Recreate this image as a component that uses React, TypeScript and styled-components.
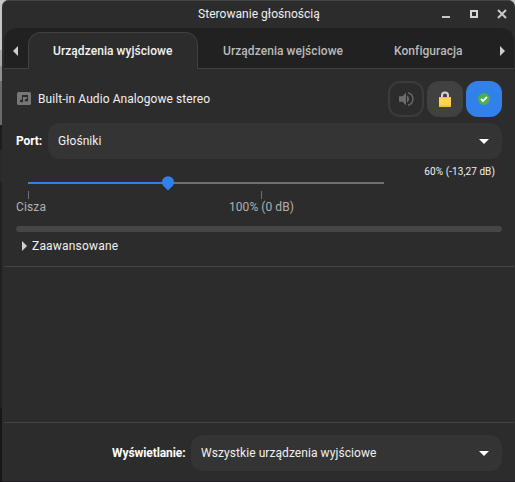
import React from "react";
import styled, { createGlobalStyle } from "styled-components";

const GlobalStyle = createGlobalStyle`
  * { box-sizing: border-box; }
  html, body, #root { margin: 0; height: 100%; }
  body { overflow: hidden; background: #1b1b1b; font: 12px/16px Roboto, sans-serif; color: #f0f0f0; }
  svg { display: block; }
`;

const Desktop = styled.div`
  display: flex;
  width: 515px;
  height: 482px;
  padding-left: 2px;
  background: linear-gradient(#c6c8c8 0 50px, #a9abab 50px 66px, #8f9191 66px 81px, #696b6b 81px 125px, #1d1d1d 125px 150px, #292929 150px 182px, #202020 182px 408px, #171717 408px);
`;

const Window = styled.main`
  display: flex;
  flex-direction: column;
  width: 513px;
  height: 482px;
  padding: 0 1px 0 2px;
  background: #2c2c2c;
  border-radius: 7px 7px 0 0;
  box-shadow: inset 0 1px #444444, inset 0 -1px #211e23;
`;

const TitleBar = styled.header`
  display: flex;
  align-items: center;
  height: 28px;
  padding-left: 194px;
`;

const Title = styled.h1`
  flex: 1;
  margin: 0;
  font-size: 12px;
  font-weight: 400;
  letter-spacing: 0.04px;
`;

const WindowControls = styled.div`
  display: flex;
  width: 76px;
`;

const TabBar = styled.nav`
  display: flex;
  height: 41px;
  background: #212121;
  border-radius: 13px 13px 0 0;
`;

const TabScroll = styled.div<{ $inset?: number }>`
  display: flex;
  align-items: center;
  justify-content: center;
  width: 24px;
  padding: 5px ${(p) => p.$inset ?? 0}px 0 0;
  border-bottom: 1px solid #414141;
`;

const Tab = styled.div<{ $active?: boolean; $width: number }>`
  width: ${(p) => p.$width}px;
  height: ${(p) => (p.$active ? 37 : 41)}px;
  margin-top: ${(p) => (p.$active ? 4 : 0)}px;
  padding: ${(p) => (p.$active ? "10px 0 0 24px" : "15px 0 0 25px")};
  border: solid #414141;
  border-width: ${(p) => (p.$active ? "1px 1px 0" : "0 0 1px")};
  border-radius: ${(p) => (p.$active ? "13px 13px 0 0" : "0")};
  background: ${(p) => (p.$active ? "#2c2c2c" : "transparent")};
  color: ${(p) => (p.$active ? "#f2f2f2" : "#bababa")};
  font-weight: 500;
  letter-spacing: 0.06px;
  white-space: nowrap;
`;

const Device = styled.section`
  height: 198px;
  padding: 12px 12px 0;
  border-bottom: 1px solid #434343;
`;

const DeviceHeader = styled.div`
  display: flex;
  align-items: center;
  height: 36px;
`;

const DeviceName = styled.div`
  flex: 1;
  padding-left: 7px;
  letter-spacing: 0.07px;
`;

const Actions = styled.div`
  display: flex;
  gap: 3px;
`;

const ActionButton = styled.button<{ $tone: "plain" | "raised" | "accent" }>`
  display: grid;
  place-items: center;
  width: 36px;
  height: 36px;
  padding: 0;
  border: 2px solid ${(p) => (p.$tone === "accent" ? "#3281ea" : p.$tone === "raised" ? "#414141" : "#3b3b3b")};
  border-radius: 12px;
  background: ${(p) => (p.$tone === "accent" ? "#3281ea" : p.$tone === "raised" ? "#414141" : "#2c2c2c")};
`;

const PortRow = styled.div`
  display: flex;
  align-items: center;
  margin-top: 6px;
`;

const FieldLabel = styled.label<{ $width: number; $spacing: number }>`
  width: ${(p) => p.$width}px;
  font-weight: 700;
  color: #fff;
  letter-spacing: ${(p) => p.$spacing}px;
`;

const Combo = styled.div`
  display: flex;
  align-items: center;
  justify-content: space-between;
  flex: 1;
  height: 36px;
  padding: 0 13px 0 10px;
  border-radius: 12px;
  background: #343434;
`;

const ComboText = styled.span<{ $spacing: number }>`
  letter-spacing: ${(p) => p.$spacing}px;
`;

const VolumeRow = styled.div`
  display: grid;
  grid-template-columns: 380px 1fr;
  height: 67px;
`;

const Scale = styled.div`
  padding-top: 23px;
`;

const Track = styled.div`
  position: relative;
  width: 356px;
  height: 2px;
  margin-left: 12px;
  background: linear-gradient(90deg, #3281ea 140px, #707070 140px);
`;

const Knob = styled.svg`
  position: absolute;
  left: 133px;
  top: -6px;
`;

const Marks = styled.div`
  display: grid;
  grid-template-columns: 213px 1fr;
  padding-top: 7px;
`;

const Mark = styled.div<{ $offset: number; $spacing: number }>`
  color: #b0b0b0;
  letter-spacing: ${(p) => p.$spacing}px;
  &::before {
    content: "";
    display: block;
    width: 1px;
    height: 8px;
    margin-left: ${(p) => p.$offset}px;
    background: #707070;
  }
`;

const VolumeValue = styled.output`
  padding: 5px 7px 0 0;
  font-size: 10px;
  letter-spacing: 0.08px;
  text-align: right;
  white-space: nowrap;
`;

const Meter = styled.div`
  height: 6px;
  border-radius: 3px;
  background: #464646;
`;

const Expander = styled.div`
  display: flex;
  align-items: center;
  gap: 5px;
  padding: 6px 0 0 6px;
  letter-spacing: 0.19px;
`;

const EmptyArea = styled.div`
  flex: 1;
`;

const FilterBar = styled.footer`
  display: flex;
  height: 60px;
  padding: 12px 12px 0 108px;
  border-top: 1px solid #434343;
  ${FieldLabel} { padding-top: 10px; }
`;

const Arrow = ({ dir, color = "#cfcfcf" }: { dir: "left" | "right" | "down"; color?: string }) => (
  <svg width={dir === "down" ? 10 : 5} height={dir === "down" ? 5 : 10}>
    <path fill={color} d={dir === "left" ? "M5 0V10L0 5Z" : dir === "right" ? "M0 0V10L5 5Z" : "M0 0H10L5 5Z"} />
  </svg>
);

export default function App() {
  return (
    <>
      <GlobalStyle />
      <Desktop>
        <Window>
          <TitleBar>
            <Title>Sterowanie głośnością</Title>
            <WindowControls>
              <svg width="76" height="28">
                <path fill="#c8c8c8" d="M4 16h8v2H4z" />
                <rect x="33" y="11" width="6" height="6" fill="none" stroke="#d5d5d5" strokeWidth="2" />
                <path d="M60 10l8 8M68 10l-8 8" fill="none" stroke="#c8c8c8" strokeWidth="2" />
              </svg>
            </WindowControls>
          </TitleBar>
          <TabBar>
            <TabScroll $inset={2}><Arrow dir="left" /></TabScroll>
            <Tab $active $width={170}>Urządzenia wyjściowe</Tab>
            <Tab $width={171}>Urządzenia wejściowe</Tab>
            <Tab $width={121}>Konfiguracja</Tab>
            <TabScroll><Arrow dir="right" /></TabScroll>
          </TabBar>
          <Device>
            <DeviceHeader>
              <svg width="15" height="14" viewBox="0 0 15 14">
                <rect x="1" y="0" width="14" height="13" rx="1.5" fill="#777" />
                <path d="M6 3h6v2H6z" fill="#2c2c2c" />
                <path d="M6.5 3.5V9M11.5 3.5V8" stroke="#2c2c2c" />
                <ellipse cx="5.5" cy="9" rx="1.6" ry="1.4" fill="#2c2c2c" />
                <ellipse cx="10.5" cy="8.2" rx="1.6" ry="1.4" fill="#2c2c2c" />
              </svg>
              <DeviceName>Built-in Audio Analogowe stereo</DeviceName>
              <Actions>
                <ActionButton $tone="plain" aria-label="Wycisz">
                  <svg width="16" height="16" viewBox="0 0 16 16">
                    <path d="M1 5.3h3.5L8 1.8v12.4L4.5 10.7H1z" fill="#6c6c6c" />
                    <path d="M9 4.3q4.2 3.7 0 7.4z" fill="#6c6c6c" />
                    <path d="M10 1.7c6.6 2 6.6 10.6 0 12.6" fill="none" stroke="#646464" strokeWidth="1.5" />
                  </svg>
                </ActionButton>
                <ActionButton $tone="raised" aria-label="Zablokuj">
                  <svg width="16" height="16" viewBox="0 0 16 16">
                    <path d="M5 7V4.5a3 3 0 0 1 6 0V7" fill="none" stroke="#d5d5d5" strokeWidth="2" />
                    <rect x="2" y="6" width="12" height="10" rx="1" fill="#fcd45c" />
                    <path d="M2 6h12v1H2zM2 14h12v2H2z" fill="#fac32d" />
                  </svg>
                </ActionButton>
                <ActionButton $tone="accent" aria-label="Ustaw jako zapasowe">
                  <svg width="16" height="16" viewBox="0 0 16 16">
                    <circle cx="8" cy="8" r="6" fill="#4caf50" />
                    <path d="M5 8l2 2 4-4" fill="none" stroke="#fff" strokeWidth="1.8" />
                  </svg>
                </ActionButton>
              </Actions>
            </DeviceHeader>
            <PortRow>
              <FieldLabel $width={32} $spacing={-0.1}>Port:</FieldLabel>
              <Combo><ComboText $spacing={0.05}>Głośniki</ComboText><Arrow dir="down" color="#fff" /></Combo>
            </PortRow>
            <VolumeRow>
              <Scale>
                <Track>
                  <Knob width="14" height="15" viewBox="0 0 14 15">
                    <path d="M7 14.5L2.4 10A6 6 0 1 1 11.6 10Z" fill="#3281ea" />
                  </Knob>
                </Track>
                <Marks>
                  <Mark $offset={12} $spacing={0.15}>Cisza</Mark>
                  <Mark $offset={32} $spacing={0.06}>100% (0 dB)</Mark>
                </Marks>
              </Scale>
              <VolumeValue>60% (-13,27 dB)</VolumeValue>
            </VolumeRow>
            <Meter />
            <Expander><Arrow dir="right" />Zaawansowane</Expander>
          </Device>
          <EmptyArea />
          <FilterBar>
            <FieldLabel $width={79} $spacing={-0.08}>Wyświetlanie:</FieldLabel>
            <Combo><ComboText $spacing={0.07}>Wszystkie urządzenia wyjściowe</ComboText><Arrow dir="down" color="#fff" /></Combo>
          </FilterBar>
        </Window>
      </Desktop>
    </>
  );
}
